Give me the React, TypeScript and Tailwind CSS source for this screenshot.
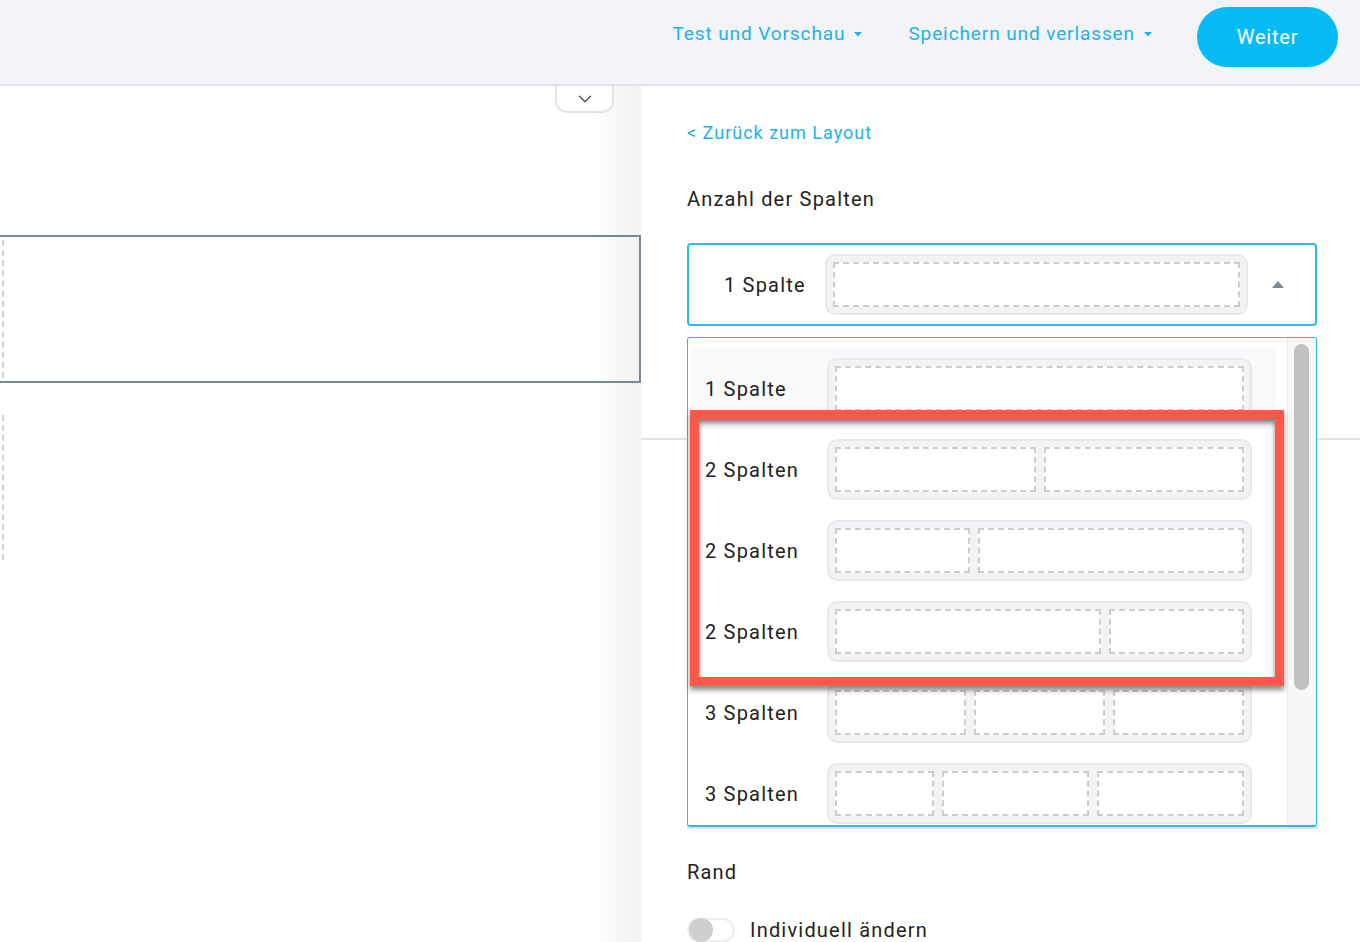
import { ChevronDown } from "lucide-react";

const layouts: { label: string; cols: number[] }[] = [
  { label: "1 Spalte", cols: [1] },
  { label: "2 Spalten", cols: [1, 1] },
  { label: "2 Spalten", cols: [1, 2] },
  { label: "2 Spalten", cols: [2, 1] },
  { label: "3 Spalten", cols: [1, 1, 1] },
  { label: "3 Spalten", cols: [2, 3, 3] },
];

function Caret() {
  return (
    <svg width="8" height="5" viewBox="0 0 8 5" className="ml-[9px]">
      <path d="M0 0 L8 0 L4 4.5 Z" fill="#1cb3e9" />
    </svg>
  );
}

function Preview({ cols, width }: { cols: number[]; width: string }) {
  return (
    <div
      className={`${width} flex h-[61px] gap-[8px] rounded-[10px] border-2 border-[#e7e9ec] bg-[#f1f3f5] p-[6px]`}
    >
      {cols.map((c, i) => (
        <div
          key={i}
          style={{ flexGrow: c, flexBasis: 0 }}
          className="border-2 border-dashed border-[#cdcdcd] bg-white"
        />
      ))}
    </div>
  );
}

export default function App() {
  return (
    <div className="flex h-[942px] w-[1360px] flex-col overflow-hidden bg-white font-['Roboto',sans-serif] text-[#222]">
      {/* header */}
      <header className="flex h-[86px] shrink-0 items-center justify-end border-b-2 border-[#e1e2e5] bg-[#f3f4f7] pb-[10px] pr-[22px]">
        <button className="mb-[6px] flex items-center text-[19px] tracking-[0.9px] text-[#1cb3e9]">
          Test und Vorschau
          <Caret />
        </button>
        <button className="mb-[6px] ml-[46px] flex items-center text-[19px] tracking-[0.9px] text-[#1cb3e9]">
          Speichern und verlassen
          <Caret />
        </button>
        <button className="ml-[45px] h-[60px] w-[141px] rounded-full bg-[#07bcf6] text-[20px] tracking-[0.8px] text-white">
          Weiter
        </button>
      </header>

      <div className="flex flex-1">
        {/* canvas */}
        <div className="relative w-[641px] shrink-0 bg-[linear-gradient(to_right,#ffffff_590px,#f2f2f4)]">
          <div className="absolute left-[555px] top-0 flex h-[27px] w-[59px] items-center justify-center rounded-b-[12px] border-2 border-t-0 border-[#e4e4e6] bg-white">
            <ChevronDown size={22} strokeWidth={1.6} className="text-[#555]" />
          </div>

          <div className="mt-[149px] flex h-[148px] border-2 border-l-0 border-[#788896] py-[3px] pl-[2px]">
            <div className="w-full border-l-2 border-dashed border-[#d0d0d0]" />
          </div>
          <div className="mt-[32px] ml-[2px] h-[145px] border-l-2 border-dashed border-[#d4d4d4]" />
        </div>

        {/* settings */}
        <div className="relative flex flex-1 flex-col pl-[46px] pt-[35px] tracking-[1.2px]">
          <a className="text-[18px] leading-[24px] tracking-[1px] text-[#1cb3e9]">&lt; Zurück zum Layout</a>
          <h2 className="mt-[40px] text-[20px] leading-[28px]">Anzahl der Spalten</h2>

          <div className="mt-[30px] flex h-[83px] w-[630px] items-center rounded-[4px] border-2 border-[#2bbbe9] pl-[35px]">
            <span className="w-[101px] text-[20px]">1 Spalte</span>
            <Preview cols={[1]} width="w-[423px]" />
            <svg width="12" height="7" viewBox="0 0 12 7" className="ml-[24px]">
              <path d="M0 7 L6 0 L12 7 Z" fill="#7c8a97" />
            </svg>
          </div>

          <div className="-ml-[46px] mt-[112px] border-t-2 border-[#e3e3e3]" />
          <div className="mt-[387px] w-[631px] border-t-2 border-[#e3e3e3]" />

          <div className="mt-[29px] text-[20px] leading-[28px]">Rand</div>
          <div className="mt-[29px] flex items-center">
            <div className="flex h-[24px] w-[48px] items-center rounded-full border-2 border-[#eeeeee] bg-white">
              <div className="h-[24px] w-[24px] rounded-full bg-[#cfcfcf]" />
            </div>
            <span className="ml-[15px] text-[20px]">Individuell ändern</span>
          </div>

          {/* dropdown list */}
          <div className="absolute left-[46px] top-[251px] flex h-[490px] w-[630px] overflow-hidden rounded-[3px] border border-b-2 border-[#2bbbe9] bg-white">
            <div className="flex flex-1 flex-col pl-[3px] pt-[10px] pr-[11px]">
              {layouts.map((l, i) => (
                <div
                  key={i}
                  className={`flex h-[81px] shrink-0 items-center pl-[14px] ${i === 0 ? "bg-[#f8f9fa]" : ""}`}
                >
                  <span className="w-[122px] text-[20px]">{l.label}</span>
                  <Preview cols={l.cols} width="w-[425px]" />
                </div>
              ))}
            </div>
            <div className="w-[29px] border-l border-[#ececec] bg-[#f8f8f8] pl-[6px] pt-[6px]">
              <div className="h-[346px] w-[15px] rounded-full bg-[#c1c1c1]" />
            </div>
          </div>

          {/* annotation */}
          <div className="absolute left-[49px] top-[324px] h-[276px] w-[594px] border-[9px] border-[#fd5849] shadow-[0_4px_5px_rgba(0,0,0,0.45),inset_0_4px_5px_rgba(0,0,0,0.5)]" />
        </div>
      </div>
    </div>
  );
}
